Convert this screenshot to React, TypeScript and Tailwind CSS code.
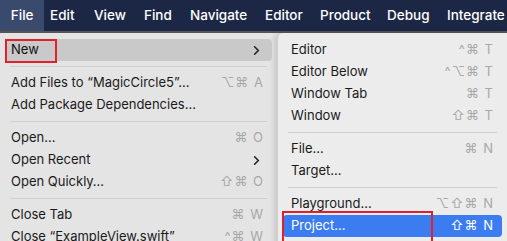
import { ChevronRight } from "lucide-react";

// label + slot width, so the bar lines up with the screenshot
const barItems = [
    { name: "Edit", w: "w-[44px]" },
    { name: "View", w: "w-[50px]" },
    { name: "Find", w: "w-[46px]" },
    { name: "Navigate", w: "w-[75px]" },
    { name: "Editor", w: "w-[55px]" },
    { name: "Product", w: "w-[67px]" },
    { name: "Debug", w: "w-[60px]" },
    { name: "Integrate", w: "w-[60px]" },
];

type Row =
    | { kind: "item"; label: string; keys?: string; arrow?: boolean; active?: "gray" | "blue"; boxed?: boolean }
    | { kind: "sep" };

const fileMenu: Row[] = [
    { kind: "item", label: "New", arrow: true, active: "gray", boxed: true },
    { kind: "sep" },
    { kind: "item", label: "Add Files to \u201cMagicCircle5\u201d\u2026", keys: "\u2325\u2318 A" },
    { kind: "item", label: "Add Package Dependencies\u2026" },
    { kind: "sep" },
    { kind: "item", label: "Open\u2026", keys: "\u2318 O" },
    { kind: "item", label: "Open Recent", arrow: true },
    { kind: "item", label: "Open Quickly\u2026", keys: "\u21e7\u2318 O" },
    { kind: "sep" },
    { kind: "item", label: "Close Tab", keys: "\u2318 W" },
    { kind: "item", label: "Close \u201cExampleView.swift\u201d", keys: "^\u2318 W" },
];

const newMenu: Row[] = [
    { kind: "item", label: "Editor", keys: "^\u2318 T" },
    { kind: "item", label: "Editor Below", keys: "^\u2325\u2318 T" },
    { kind: "item", label: "Window Tab", keys: "\u2318 T" },
    { kind: "item", label: "Window", keys: "\u21e7\u2318 T" },
    { kind: "sep" },
    { kind: "item", label: "File\u2026", keys: "\u2318 N" },
    { kind: "item", label: "Target\u2026" },
    { kind: "sep" },
    { kind: "item", label: "Playground\u2026", keys: "\u2325\u21e7\u2318 N" },
    { kind: "item", label: "Project\u2026", keys: "\u21e7\u2318 N", active: "blue", boxed: true },
];

function MenuRows({ rows, padLeft }: { rows: Row[]; padLeft: string }) {
    return (
        <>
            {rows.map((row, i) => {
                if (row.kind === "sep") {
                    return <div key={i} className="mx-[10px] my-[5px] h-px bg-[#cfcfcf]" />;
                }
                const bg =
                    row.active === "gray"
                        ? "bg-[#c9c9c9] text-[#111]"
                        : row.active === "blue"
                          ? "bg-[#3b7cf0] text-white"
                          : "text-[#1a1a1a]";
                return (
                    <div
                        key={i}
                        className={`relative mx-[5px] flex h-[22px] items-center rounded-[4px] pr-[8px] ${bg} ${padLeft}`}
                    >
                        <span className="whitespace-nowrap">{row.label}</span>
                        <span className="flex-1" />
                        {row.keys && (
                            <span
                                className={`whitespace-nowrap tracking-[1px] ${
                                    row.active === "blue" ? "text-white" : "text-[#a8a8a8]"
                                }`}
                            >
                                {row.keys}
                            </span>
                        )}
                        {row.arrow && <ChevronRight size={15} strokeWidth={2.6} className="text-[#222]" />}
                        {row.boxed && row.active === "gray" && (
                            <div className="absolute left-0 top-0 h-[24px] w-[52px] border-2 border-[#e0202a]" />
                        )}
                        {row.boxed && row.active === "blue" && (
                            <div className="absolute -left-[1px] -top-[4px] h-[32px] w-[151px] border-2 border-[#e0202a]" />
                        )}
                    </div>
                );
            })}
        </>
    );
}

export default function App() {
    return (
        <div
            className="flex h-[241px] w-[507px] flex-col overflow-hidden bg-[#e4e4e4] text-[13px]"
            style={{ fontFamily: "Inter, 'Liberation Sans', sans-serif" }}
        >
            {/* Menu bar */}
            <div className="flex h-[31px] shrink-0 items-center bg-[#1c2746] text-[13.5px] font-medium text-white">
                <div className="flex h-full w-[47px] items-center justify-center bg-[#3a4a6c]">File</div>
                <div className="w-[6px]" />
                {barItems.map((item) => (
                    <div key={item.name} className={`flex h-full shrink-0 items-center whitespace-nowrap ${item.w}`}>
                        {item.name}
                    </div>
                ))}
            </div>
            <div className="h-[2px] shrink-0 bg-[#555]" />

            {/* Menus */}
            <div className="flex flex-1">
                <div className="w-[277px] shrink-0 pt-[6px]">
                    <MenuRows rows={fileMenu} padLeft="pl-[6px]" />
                </div>
                <div className="flex-1 rounded-tl-[6px] border-l border-[#d0d0d0] bg-[#ececec] pt-[6px] shadow-[-2px_0_6px_rgba(0,0,0,0.15)]">
                    <MenuRows rows={newMenu} padLeft="pl-[8px]" />
                </div>
            </div>
        </div>
    );
}
